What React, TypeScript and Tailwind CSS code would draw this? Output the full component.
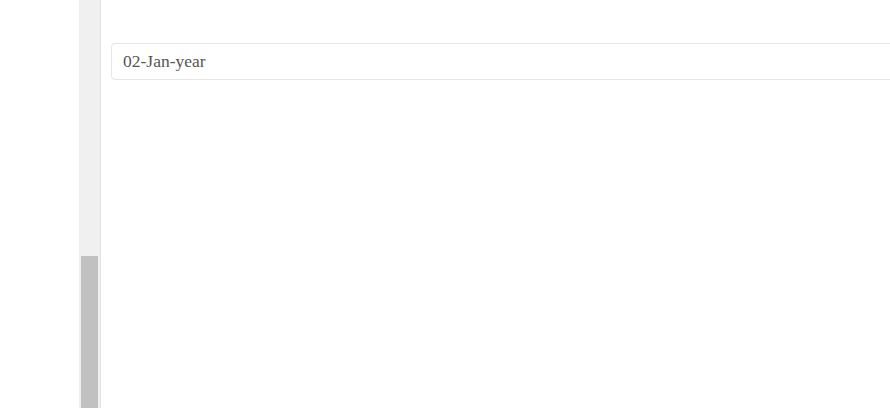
export default function App() {
  return (
    <div className="flex h-[408px] w-[890px] overflow-hidden bg-white">
      <div className="w-[79px] shrink-0 bg-white" />

      {/* scrollbar */}
      <div className="flex w-[21px] shrink-0 flex-col bg-[#f0f0f0] px-[2px] pt-[256px]">
        <div className="flex-1 bg-[#c1c1c1]" />
      </div>
      <div className="w-px shrink-0 bg-[#e3e3e3]" />

      <div className="flex-1 pl-[10px] pt-[43px]">
        <div className="flex h-[37px] w-[800px] items-center rounded-[4px] border border-[#e6e6e6] px-[11px] font-['Liberation_Serif',serif] text-[17.5px] text-[#555]">
          02-Jan-year
        </div>
      </div>
    </div>
  );
}
